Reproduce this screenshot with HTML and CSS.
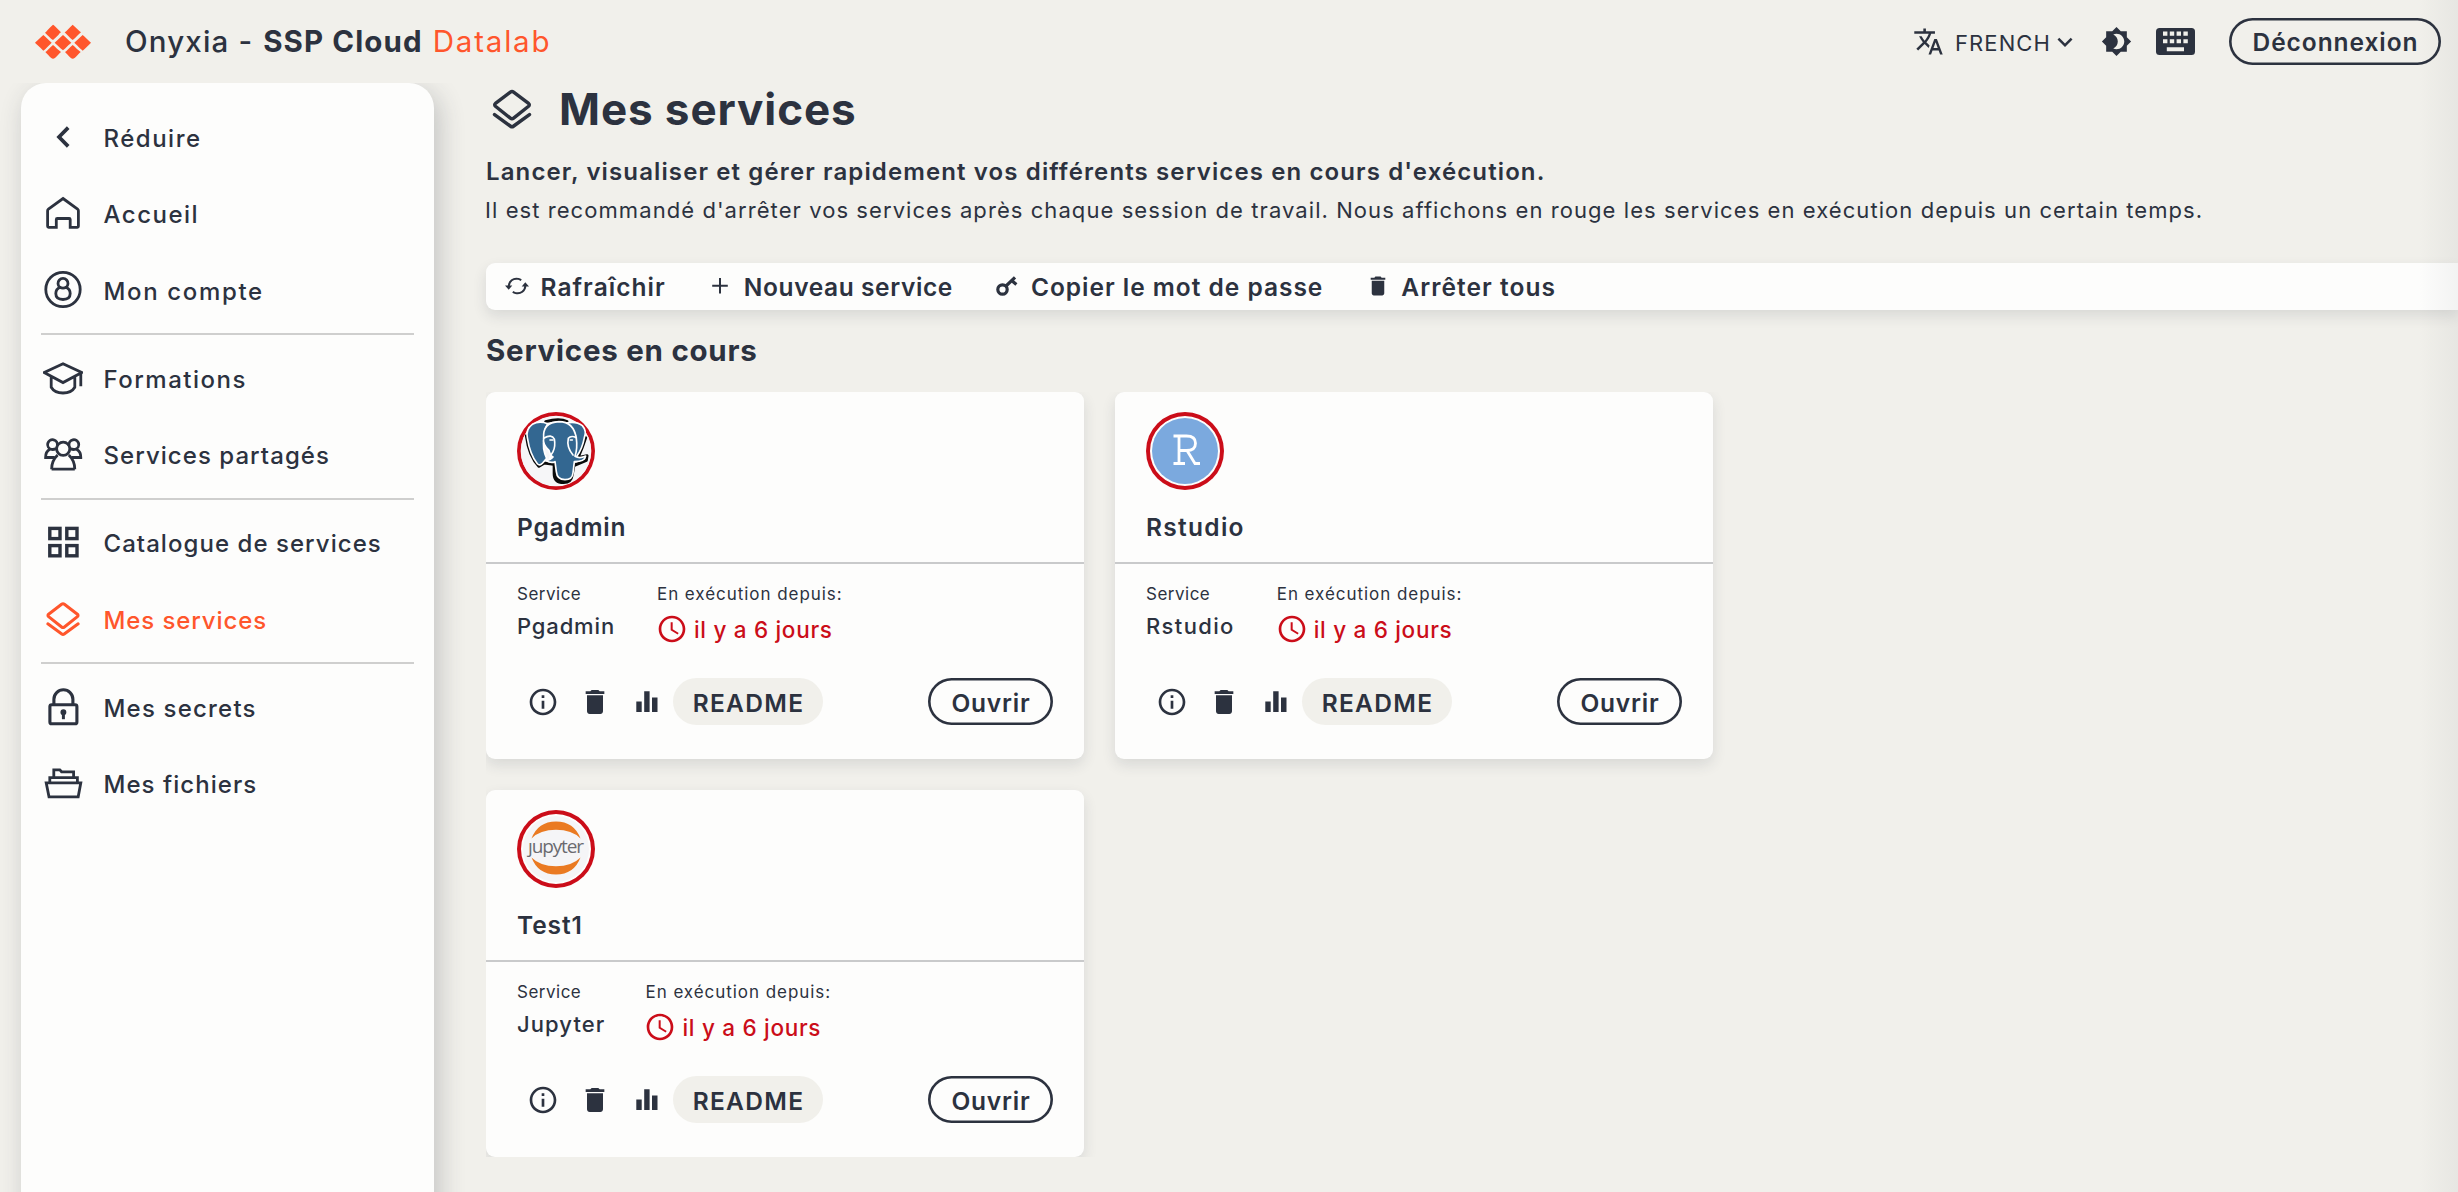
FILE: index.html
```
<!DOCTYPE html>
<html lang="fr">
<head>
<meta charset="utf-8">
<title>Onyxia - SSP Cloud Datalab</title>
<link rel="stylesheet" href="styles.css">
</head>
<body>
<svg class="sprite" aria-hidden="true">
  <symbol id="layers" viewBox="0 0 40 40"><g fill="none" stroke="currentColor" stroke-width="3" stroke-linecap="round" stroke-linejoin="round"><path d="M18.6 5.3 5.6 15.2q-1.3 1.2 0 2.4L18.6 28q1.4 1.1 2.8 0L34.4 17.6q1.3-1.2 0-2.4L21.4 5.3q-1.4-1.1-2.8 0Z"/><path d="M4.8 24.8 18.8 35q1.2.9 2.4 0L35.2 24.8"/></g></symbol>
  <symbol id="trash" viewBox="0 0 24 24"><path fill="currentColor" d="M6 19c0 1.1.9 2 2 2h8c1.1 0 2-.9 2-2V7H6v12zM19 4h-3.500l-1-1h-5l-1 1H5v2h14V4z"/></symbol>
  <symbol id="info" viewBox="0 0 24 24"><path fill="currentColor" d="M11 7h2v2h-2zm0 4h2v6h-2zm1-9C6.480 2 2 6.480 2 12s4.480 10 10 10 10-4.480 10-10S17.520 2 12 2zm0 18c-4.410 0-8-3.590-8-8s3.590-8 8-8 8 3.590 8 8-3.590 8-8 8z"/></symbol>
  <symbol id="bars" viewBox="0 0 32 32"><path fill="currentColor" d="M5.300 15.500h5.400v10.500H5.300zM13.200 5.200h5.400V26h-5.400zM21 11.500h5.500V26H21z"/></symbol>
  <symbol id="clock" viewBox="0 0 24 24"><path fill="currentColor" d="M11.990 2C6.470 2 2 6.480 2 12s4.470 10 9.990 10C17.520 22 22 17.520 22 12S17.520 2 11.990 2zM12 20c-4.420 0-8-3.580-8-8s3.580-8 8-8 8 3.580 8 8-3.580 8-8 8zm.5-13H11v6l5.250 3.150.75-1.230-4.500-2.670z"/></symbol>
</svg>

<header class="header">
  <svg class="logo" viewBox="0 0 168 102"><g fill="#ff562c"><path d="M54-1Q57 0 78 22q-4 2-8 8Q59 41 54 45 48 42 43 36 36 29 30 23q3-2 8-8Q48 4 54-1Z"/><path d="M113-1Q108 3 98 14q-6 6-9 8 3 3 8 8 11 12 16 15 5-3 16-15 5-5 9-8-5-4-12-11Q118 3 113-1Z"/><path d="M25 30Q17 37 8 46 2 52 0 53q2 2 8 8 12 11 17 16 5-3 16-15 5-5 9-9-5-4-12-11Q29 33 25 30Z"/><path d="M84 30Q76 37 67 46q-6 6-8 7 2 2 8 8 12 12 17 15 5-3 16-15 5-5 9-8-5-4-12-11Q88 33 84 30Z"/><path d="M143 30q-8 7-17 16-6 6-8 7 2 2 8 8 12 13 17 16 5-4 16-15 6-6 9-9-5-4-12-11-9-9-13-12Z"/><path d="M54 60q-8 7-15 14-5 5-8 7 3 3 8 8 10 12 15 12 6 0 15-11 5-6 9-9-5-4-12-10-7-8-12-11Z"/><path d="M113 60q-8 7-15 14-5 5-8 7 3 3 8 8 10 12 15 12 6 0 15-11 5-6 9-9-5-4-12-10-7-8-12-11Z"/></g></svg>
  <div class="brand"><span class="brand-name">Onyxia -</span><span class="brand-org">SSP Cloud</span><span class="brand-lab">Datalab</span></div>
  <div class="header-tools">
    <div class="lang">
      <svg width="31" height="31" viewBox="0 0 24 24"><path fill="currentColor" d="M12.870 15.070l-2.540-2.510.03-.03c1.740-1.940 2.980-4.170 3.710-6.530H17V4h-7V2H8v2H1v1.990h11.170C11.500 7.920 10.440 9.750 9 11.350 8.070 10.320 7.300 9.190 6.690 8h-2c.73 1.630 1.730 3.170 2.980 4.560l-5.090 5.020L4 19l5-5 3.110 3.110.76-2.040zM18.500 10h-2L12 22h2l1.120-3h4.750L21 22h2l-4.500-12zm-2.620 7l1.620-4.330L19.120 17h-3.240z"/></svg>
      <span class="lang-name">FRENCH</span>
      <svg width="30" height="30" viewBox="0 0 24 24"><path fill="currentColor" d="M7.410 8.590L12 13.170l4.590-4.580L18 10l-6 6-6-6 1.410-1.410z"/></svg>
    </div>
    <svg width="31" height="31" viewBox="0 0 24 24"><path fill="currentColor" d="M20 8.690V4h-4.690L12 .69 8.690 4H4v4.690L.69 12 4 15.310V20h4.690L12 23.310 15.310 20H20v-4.690L23.310 12 20 8.690zM12 18c-.89 0-1.740-.2-2.500-.55C11.560 16.500 13 14.420 13 12s-1.440-4.500-3.500-5.450C10.260 6.200 11.110 6 12 6c3.310 0 6 2.690 6 6s-2.690 6-6 6z"/></svg>
    <svg class="keyboard" width="39" height="27" viewBox="0 0 39 27"><rect width="39" height="27" rx="3.500" fill="currentColor"/><path fill="#f1f0eb" d="M7 3.400h4.400v4.400H7zM13.800 3.400h4.400v4.400h-4.400zM20.600 3.400H25v4.400h-4.400zM27.400 3.400h4.400v4.400h-4.400zM7 11.200h4.400v4H7zM13.800 11.200h4.400v4h-4.400zM20.600 11.200H25v4h-4.400zM27.400 11.200h4.400v4h-4.400zM10.800 19.200h17.200v4H10.800z"/></svg>
    <button class="btn logout">Déconnexion</button>
  </div>
</header>

<div class="body">
  <nav class="sidebar">
    <a class="item"><svg viewBox="0 0 40 40"><path d="M25.200 10.600 16 20l9.200 9.400" stroke-width="3.700"/></svg><span class="w-a">Réduire</span></a>
    <a class="item"><svg viewBox="0 0 40 40"><path d="M20 5.500 34.600 16.200q.8.600.8 1.500V33.300q0 1-1 1H27.200V26.500q0-1-1-1H14.300q-1 0-1 1V34.300H5.600q-1 0-1-1V17.700q0-.9.800-1.500Z"/></svg><span class="w-a">Accueil</span></a>
    <a class="item"><svg viewBox="0 0 40 40"><circle cx="20" cy="19.500" r="17.200"/><path d="M16.800 17.300a5 5 0 1 1 6.400 0c2.500 1.300 4 3.600 4 6.300 0 4.200-3 5.900-7.200 5.900s-7.200-1.700-7.200-5.900c0-2.700 1.500-5 4-6.300ZM16.800 17.300q3.200 1.800 6.400 0"/></svg><span class="w-b">Mon compte</span></a>
    <hr>
    <a class="item"><svg viewBox="0 0 40 40"><path d="M20 5.800 38.800 14.600 20 24.600 1.200 14.600ZM8.200 18.800v10.400c2.200 3.800 6.500 5.800 11.800 5.800s9.600-2 11.800-5.800V18.800M37.800 15v13.200"/></svg><span class="w-a">Formations</span></a>
    <a class="item"><svg viewBox="0 0 40 40"><circle cx="20.200" cy="14.800" r="6.600"/><path d="M8.600 35.200c0-6 1.600-10 6-14.200M31.800 35.200c0-6-1.600-10-6-14.200M8.600 35.200h23.200"/><path d="M14.300 11.600a4.900 4.900 0 1 0-6 3.700q1.700.6 5.200-.7M26.100 11.600a4.900 4.900 0 1 1 6 3.700q-1.700.6-5.200-.7M6.800 15.200C3.600 17 2.500 20 2.600 23.500h9.200M33.600 15.200c3.200 1.800 4.300 4.800 4.200 8.300h-9.200"/></svg><span class="w-c">Services partagés</span></a>
    <hr>
    <a class="item"><svg viewBox="0 0 40 40"><g stroke-width="3.400"><rect x="6.800" y="6.400" width="10.200" height="10.200"/><rect x="23.800" y="6.400" width="10.200" height="10.200"/><rect x="6.800" y="23.600" width="10.200" height="10.200"/><rect x="23.800" y="23.600" width="10.200" height="10.200"/></g></svg><span class="w-c">Catalogue de services</span></a>
    <a class="item active"><svg><use href="#layers"/></svg><span class="w-e">Mes services</span></a>
    <hr>
    <a class="item"><svg viewBox="0 0 40 40"><g stroke-width="3.100"><rect x="6.900" y="17.800" width="27" height="18.900" rx="1.800"/><path d="M10.900 17.500v-5.200a9.500 9.500 0 0 1 19 0v5.200"/></g><circle cx="20.400" cy="25.200" r="2.200" fill="currentColor" stroke-width="1.500"/><path d="M20.400 25v7.200" stroke-width="3"/></svg><span class="w-d">Mes secrets</span></a>
    <a class="item"><svg viewBox="0 0 40 40"><path d="M3.200 19.800h34.600l-2.600 14H6ZM6.800 19v-4.400h27.600V19M10.800 14V6.800h6l1.800 2h12V14"/></svg><span class="w-c">Mes fichiers</span></a>
  </nav>

  <main class="main">
    <h1 class="title"><svg><use href="#layers"/></svg><span>Mes services</span></h1>
    <p class="lead">Lancer, visualiser et gérer rapidement vos différents services en cours d'exécution.</p>
    <p class="hint">Il est recommandé d'arrêter vos services après chaque session de travail. Nous affichons en rouge les services en exécution depuis un certain temps.</p>

    <div class="toolbar">
      <button class="tool"><svg viewBox="0 0 24 24"><g fill="none" stroke="currentColor" stroke-width="2"><path d="M3.600 12.500c.3-5.500 4.700-8.800 9.800-7.600 1.100.3 2 .8 2.800 1.400M20.400 11.500c-.3 5.500-4.700 8.800-9.800 7.600-1.100-.3-2-.8-2.800-1.400"/></g><path fill="currentColor" d="M0 11.500h7.300l-3.600 4.300zM16.700 12.500H24l-3.700-4.300z"/></svg><span class="t-a">Rafraîchir</span></button>
      <button class="tool"><svg viewBox="0 0 24 24"><path d="M12 4v15.500M4.200 11.700h15.600" stroke="currentColor" stroke-width="2"/></svg><span class="t-b">Nouveau service</span></button>
      <button class="tool"><svg viewBox="0 0 24 24"><g fill="none" stroke="currentColor" stroke-width="3.200"><circle cx="7.500" cy="15.500" r="4.700"/><path d="M11 12 20 3.300M16.600 6.600l4.800 4"/></g></svg><span class="t-c">Copier le mot de passe</span></button>
      <button class="tool"><svg viewBox="0.500 0.500 23 23"><use href="#trash" width="24" height="24"/></svg><span class="t-a">Arrêter tous</span></button>
    </div>

    <h2 class="section">Services en cours</h2>

    <div class="cards">
      <article class="card">
        <div class="card-top">
          <div class="avatar"><svg viewBox="22 21 234 234">
            <circle cx="139" cy="138" r="106" fill="#f6f6f8"/>
            <g stroke-linejoin="round" stroke-linecap="round">
              <path d="M108 50Q150 38 172 50M50 92Q58 155 88 184L104 174 132 178M228 98Q218 130 205 158L232 152 230 166 196 180" fill="none" stroke="#0a0a0a" stroke-width="9"/>
              <path d="M134 172v34q0 26 28 26 22 0 25-22l6-34" fill="#0a0a0a" stroke="#0a0a0a" stroke-width="10"/>
              <g fill="#336791" stroke="#fff" stroke-width="5">
                <path d="M114 56Q88 46 68 58 48 72 53 98q8 52 30 78 7 8 16-2l12-14q-14-30-8-60 0-26 11-44Z"/>
                <path d="M170 54q30-6 48 8 14 16 6 36-6 34-24 58l-8-2q6-30 6-60-8-28-28-40Z"/>
                <path d="M102 100Q98 52 148 50q44 0 52 50 4 30-4 54 14 8 32-1-2 17-34 17-2 18-4 34-2 20-24 20-24 0-26-24l-4-30q-12 6-28-4 14 0 22-10-8-4-12-20Q98 118 102 100Z"/>
                <path d="M102 100q24-14 32 2 4 22-4 38-8 10-10 22" fill="none"/>
                <path d="M200 98q-16-8-24 2-6 26 14 50" fill="none"/>
              </g>
              <path d="M121 105h9M182 105h6" stroke="#fff" stroke-width="5"/>
            </g></svg></div>
          <h3 class="c-a">Pgadmin</h3>
        </div>
        <div class="card-body">
          <div class="facts">
            <div><div class="label l-a">Service</div><div class="value v-a">Pgadmin</div></div>
            <div><div class="label l-b">En exécution depuis:</div><div class="since"><svg><use href="#clock"/></svg><span>il y a 6 jours</span></div></div>
          </div>
          <div class="actions">
            <button class="icon"><svg><use href="#info"/></svg></button><button class="icon"><svg><use href="#trash"/></svg></button><button class="icon"><svg><use href="#bars"/></svg></button>
            <button class="btn readme">README</button><button class="btn open">Ouvrir</button>
          </div>
        </div>
      </article>

      <article class="card">
        <div class="card-top">
          <div class="avatar"><svg viewBox="0 0 78 78"><circle cx="39" cy="39" r="33" fill="#7ba9de"/><g fill="none" stroke="#fff" stroke-width="2.800"><path d="M27.500 24h13q9 0 9 7.200 0 7.300-9 7.300H33M33 24v27.500M27.500 51.500h11.500M41 38.500l8 13h5"/></g></svg></div>
          <h3 class="c-b">Rstudio</h3>
        </div>
        <div class="card-body">
          <div class="facts">
            <div><div class="label l-a">Service</div><div class="value v-b">Rstudio</div></div>
            <div><div class="label l-b">En exécution depuis:</div><div class="since"><svg><use href="#clock"/></svg><span>il y a 6 jours</span></div></div>
          </div>
          <div class="actions">
            <button class="icon"><svg><use href="#info"/></svg></button><button class="icon"><svg><use href="#trash"/></svg></button><button class="icon"><svg><use href="#bars"/></svg></button>
            <button class="btn readme">README</button><button class="btn open">Ouvrir</button>
          </div>
        </div>
      </article>

      <article class="card">
        <div class="card-top">
          <div class="avatar"><svg viewBox="0 0 78 78"><circle cx="39" cy="39" r="33" fill="#f5f5f7"/><g fill="#ea7a22"><path d="M14.500 28.500Q21 11.500 39 11.500t24.500 17Q55 19.800 39 19.800T14.500 28.500Z"/><path d="M14.500 47.500Q23 56.200 39 56.200t24.500-8.700Q57 64.500 39 64.500T14.500 47.500Z"/></g><text x="39" y="42.500" text-anchor="middle" textLength="56" class="jupyter">ȷupyter</text></svg></div>
          <h3 class="c-c">Test1</h3>
        </div>
        <div class="card-body">
          <div class="facts">
            <div><div class="label l-a">Service</div><div class="value v-c">Jupyter</div></div>
            <div><div class="label l-b">En exécution depuis:</div><div class="since"><svg><use href="#clock"/></svg><span>il y a 6 jours</span></div></div>
          </div>
          <div class="actions">
            <button class="icon"><svg><use href="#info"/></svg></button><button class="icon"><svg><use href="#trash"/></svg></button><button class="icon"><svg><use href="#bars"/></svg></button>
            <button class="btn readme">README</button><button class="btn open">Ouvrir</button>
          </div>
        </div>
      </article>
    </div>
  </main>
</div>
<div class="edge"></div>
</body>
</html>
```
FILE: styles.css
```
* { box-sizing: border-box; }
body {
  margin: 0;
  height: 1192px;
  overflow: hidden;
  display: flex;
  flex-direction: column;
  background: #f1f0eb;
  color: #2c323f;
  font-family: Inter, "Liberation Sans", sans-serif;
}
svg { display: block; flex: none; }
.sprite { position: absolute; width: 0; height: 0; }
button { background: none; border: 0; padding: 0; font: inherit; color: inherit; }
h1, h2, h3, p, hr { margin: 0; }

/* header */
.header { height: 83px; flex: none; display: flex; align-items: center; padding: 0 17px 0 35px; }
.logo { width: 56px; height: 34px; overflow: visible; }
.brand { display: flex; gap: 10px; margin-left: 34px; font-size: 29.5px; line-height: 36px; padding-bottom: 1px; white-space: nowrap; }
.brand-name { font-weight: 500; letter-spacing: 1.15px; }
.brand-org { font-weight: 700; letter-spacing: 1.1px; }
.brand-lab { color: #ff562c; letter-spacing: 1.8px; }
.header-tools { margin-left: auto; display: flex; align-items: center; }
.lang { display: flex; align-items: center; margin-right: 21px; font-size: 22px; }
.lang-name { width: 106px; padding: 2px 0 0 11px; letter-spacing: 1.1px; }
.keyboard { margin: 0 34px 0 24px; }
.btn {
  height: 47px;
  border-radius: 24px;
  box-shadow: inset 0 0 0 2.6px #2c323f;
  font-size: 24.5px;
  font-weight: 600;
  text-align: center;
}
.logout { width: 212px; letter-spacing: .95px; text-indent: 1px; }

/* sidebar */
.body { flex: 1; min-height: 0; display: flex; overflow: hidden; }
.sidebar {
  width: 413px;
  height: 1200px;
  flex: none;
  margin-left: 21px;
  padding: 15.5px 20px 0;
  background: #fdfdfc;
  border-radius: 25px 25px 0 0;
  box-shadow: 5px 8px 26px rgba(44, 50, 63, .24);
}
.item { height: 76.5px; display: flex; align-items: center; gap: 21px; padding-left: 1.5px; font-size: 24px; font-weight: 500; white-space: nowrap; }
.item svg { width: 40px; height: 40px; fill: none; stroke: currentColor; stroke-width: 2.8; }
.item span { padding-top: 2.5px; }
.item.active { color: #ff562c; }
.sidebar hr { height: 2px; border: 0; background: #cfcfce; margin: 5px 0 4.5px; }
.w-a { letter-spacing: 1.5px; }
.w-b { letter-spacing: 1.65px; }
.w-c { letter-spacing: 1.05px; }
.w-d { letter-spacing: 1.2px; }
.w-e { letter-spacing: .9px; }

/* main column */
.main { flex: 1; min-width: 0; padding-left: 52px; white-space: nowrap; }
.title { display: flex; align-items: center; gap: 24px; height: 52px; padding-left: 3px; font-size: 44px; font-weight: 700; letter-spacing: .9px; }
.title svg { width: 46px; height: 46px; }
.lead { margin-top: 17.5px; font-size: 24px; line-height: 38px; font-weight: 600; letter-spacing: 1.12px; }
.hint { font-size: 22px; line-height: 38px; letter-spacing: 1.07px; margin-left: -1px; }
.toolbar {
  height: 47px;
  margin-top: 34px;
  padding-left: 19px;
  display: flex;
  gap: 42.5px;
  background: #fdfdfc;
  border-radius: 9px 0 0 9px;
  box-shadow: 0 6px 14px rgba(44, 50, 63, .12);
}
.tool { display: flex; align-items: center; gap: 11.5px; font-size: 24.5px; font-weight: 600; }
.tool svg { width: 24px; height: 24px; }
.tool span { padding-top: 2px; }
.t-a { letter-spacing: 1.05px; }
.t-b { letter-spacing: .6px; }
.t-c { letter-spacing: .98px; }
.section { margin: 20px 0 22px; font-size: 29.5px; line-height: 40px; font-weight: 700; letter-spacing: .75px; }

/* service cards */
.cards {
  display: grid;
  grid-template-columns: repeat(2, 598px);
  grid-auto-rows: 367px;
  gap: 31px;
  height: 765px;
  overflow: hidden;
}
.card { background: #fdfdfc; border-radius: 9px; box-shadow: 0 6px 14px rgba(44, 50, 63, .12); }
.card-top { height: 172.5px; padding: 20px 31px 0; border-bottom: 2px solid #c9cacb; }
.avatar { width: 78px; height: 78px; border-radius: 50%; box-shadow: inset 0 0 0 4px #cb0d19; }
.avatar svg { width: 78px; height: 78px; }
.jupyter { font: 19px "Open Sans", sans-serif; fill: #6b6b70; }
.card h3 { margin-top: 19.5px; font-size: 24.5px; line-height: 36px; font-weight: 600; }
.c-a { letter-spacing: .8px; }
.c-b { letter-spacing: 1.3px; }
.c-c { letter-spacing: .9px; }
.card-body { padding: 19px 31px 0; }
.facts { display: flex; gap: 42px; height: 95px; }
.label { font-size: 17px; line-height: 22px; height: 31px; }
.l-a { letter-spacing: .5px; }
.l-b { letter-spacing: .95px; }
.value { font-size: 22px; line-height: 24px; font-weight: 500; }
.v-a { letter-spacing: .85px; }
.v-b { letter-spacing: 1.35px; }
.v-c { letter-spacing: 1.1px; margin-right: -2px; }
.since { display: flex; align-items: center; gap: 6px; height: 28px; margin-top: 1.5px; font-size: 22.5px; font-weight: 500; letter-spacing: .7px; color: #cb0d19; }
.since svg { width: 32px; height: 32px; margin: -2px 0 0 -1px; }
.actions { display: flex; align-items: center; }
.icon { padding: 0 10px; }
.icon svg { width: 32px; height: 32px; }
.readme { width: 150px; background: #f1f0eb; box-shadow: none; letter-spacing: 1.3px; text-indent: 1px; padding-top: 2px; }
.open { width: 125px; margin-left: auto; letter-spacing: .8px; text-indent: 1px; padding-top: 2px; }

/* soft shade along the right edge of the window */
.edge { position: absolute; right: 0; top: 0; width: 40px; height: 1192px; background: linear-gradient(to right, transparent, rgba(44, 50, 63, .05)); }
```
